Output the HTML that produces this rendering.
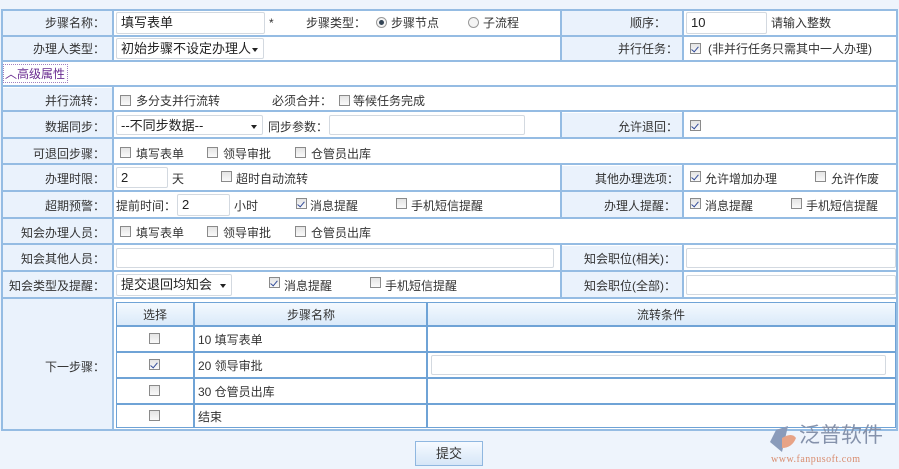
<!DOCTYPE html><html><head><meta charset="utf-8"><style>
*{box-sizing:border-box;margin:0;padding:0}
body{width:899px;height:469px;background:#eef4fc;font-family:"Liberation Sans","Noto Sans CJK SC",sans-serif;font-size:12px;color:#333;position:relative;overflow:hidden}
.a{position:absolute}
.w{background:#fff}
.hl{position:absolute;left:1px;width:897px;height:2px;background:#95bce3}
.vl{position:absolute;width:2px;background:#95bce3}
.t{position:absolute;white-space:nowrap;line-height:14px}
.in{position:absolute;background:#fff;border:1px solid #d3d9e0;border-radius:2px;padding-left:4px;line-height:20px;font-size:13px;color:#222}
.cb{position:absolute;width:11px;height:11px;border:1px solid #8a8a8a;background:linear-gradient(#e4e4e4,#fafafa);overflow:hidden}
.ck::after{content:"";position:absolute;left:2px;top:1px;width:3px;height:6px;border-right:1.5px solid #334c99;border-bottom:1.5px solid #334c99;transform:rotate(40deg)}
.rd{position:absolute;width:11px;height:11px;border:1px solid #999;border-radius:50%;background:#f4f4f4}
.rd.on::after{content:"";position:absolute;left:2px;top:2px;width:5px;height:5px;border-radius:50%;background:#345}
.sel::after{content:"";position:absolute;right:5px;top:9px;border:3px solid transparent;border-top:4px solid #222}
</style></head><body>
<div class="a w" style="left:1px;top:9px;width:897px;height:422px;border:2px solid #95bce3"></div>
<div class="a" style="left:3px;top:11px;width:110px;height:50px;background:#eaf2fc"></div>
<div class="a" style="left:3px;top:88px;width:110px;height:341px;background:#eaf2fc"></div>
<div class="a" style="left:561px;top:11px;width:122px;height:50px;background:#eaf2fc"></div>
<div class="a" style="left:561px;top:113px;width:122px;height:25px;background:#eaf2fc"></div>
<div class="a" style="left:561px;top:166px;width:122px;height:52px;background:#eaf2fc"></div>
<div class="a" style="left:561px;top:246px;width:122px;height:52px;background:#eaf2fc"></div>
<div class="hl" style="top:35px"></div><div class="hl" style="top:60px"></div><div class="hl" style="top:85px"></div><div class="hl" style="top:110px"></div><div class="hl" style="top:137px"></div><div class="hl" style="top:163px"></div><div class="hl" style="top:190px"></div><div class="hl" style="top:217px"></div><div class="hl" style="top:243px"></div><div class="hl" style="top:270px"></div><div class="hl" style="top:297px"></div>
<div class="vl" style="left:112px;top:9px;height:52px"></div>
<div class="vl" style="left:112px;top:86px;height:345px"></div>
<div class="vl" style="left:560px;top:9px;height:52px"></div><div class="vl" style="left:682px;top:9px;height:52px"></div>
<div class="vl" style="left:560px;top:111px;height:27px"></div><div class="vl" style="left:682px;top:111px;height:27px"></div>
<div class="vl" style="left:560px;top:164px;height:54px"></div><div class="vl" style="left:682px;top:164px;height:54px"></div>
<div class="vl" style="left:560px;top:244px;height:54px"></div><div class="vl" style="left:682px;top:244px;height:54px"></div>

<div class="t" style="left:45px;top:16px">步骤名称：</div>
<div class="in" style="left:116px;top:12px;width:149px;height:22px">填写表单</div>
<div class="t" style="left:269px;top:16px">*</div>
<div class="t" style="left:306px;top:16px">步骤类型：</div>
<div class="rd on" style="left:376px;top:17px"></div><div class="t" style="left:391px;top:16px">步骤节点</div>
<div class="rd" style="left:468px;top:17px"></div><div class="t" style="left:483px;top:16px">子流程</div>
<div class="t" style="left:630px;top:16px">顺序：</div>
<div class="in" style="left:686px;top:12px;width:81px;height:22px">10</div>
<div class="t" style="left:771px;top:16px">请输入整数</div>
<div class="t" style="left:33px;top:42px">办理人类型：</div>
<div class="in sel" style="left:116px;top:38px;width:148px;height:21px">初始步骤不设定办理人</div>
<div class="t" style="left:618px;top:42px">并行任务：</div>
<div class="cb ck" style="left:690px;top:43px"></div>
<div class="t" style="left:708px;top:42px">(非并行任务只需其中一人办理)</div>
<div class="a" style="left:3px;top:64px;width:65px;height:19px;border:1px dotted #a080c0"></div>
<div class="t" style="left:5px;top:67px;color:#6a2c91">︿高级属性</div>
<div class="t" style="left:45px;top:94px">并行流转：</div>
<div class="cb" style="left:120px;top:95px"></div><div class="t" style="left:136px;top:94px">多分支并行流转</div>
<div class="t" style="left:272px;top:94px">必须合并：</div>
<div class="cb" style="left:339px;top:95px"></div><div class="t" style="left:353px;top:94px">等候任务完成</div>
<div class="t" style="left:45px;top:120px">数据同步：</div>
<div class="in sel" style="left:116px;top:115px;width:147px;height:20px">--不同步数据--</div>
<div class="t" style="left:268px;top:120px">同步参数：</div>
<div class="in" style="left:329px;top:115px;width:196px;height:20px"></div>
<div class="t" style="left:618px;top:120px">允许退回：</div>
<div class="cb ck" style="left:690px;top:120px"></div>
<div class="t" style="left:33px;top:147px">可退回步骤：</div>
<div class="cb" style="left:120px;top:147px"></div><div class="t" style="left:136px;top:147px">填写表单</div>
<div class="cb" style="left:207px;top:147px"></div><div class="t" style="left:223px;top:147px">领导审批</div>
<div class="cb" style="left:295px;top:147px"></div><div class="t" style="left:311px;top:147px">仓管员出库</div>
<div class="t" style="left:45px;top:172px">办理时限：</div>
<div class="in" style="left:116px;top:167px;width:52px;height:21px">2</div>
<div class="t" style="left:172px;top:172px">天</div>
<div class="cb" style="left:221px;top:171px"></div><div class="t" style="left:236px;top:172px">超时自动流转</div>
<div class="t" style="left:595px;top:172px">其他办理选项：</div>
<div class="cb ck" style="left:690px;top:171px"></div><div class="t" style="left:705px;top:172px">允许增加办理</div>
<div class="cb" style="left:815px;top:171px"></div><div class="t" style="left:831px;top:172px">允许作废</div>
<div class="t" style="left:45px;top:199px">超期预警：</div>
<div class="t" style="left:116px;top:199px">提前时间：</div>
<div class="in" style="left:177px;top:194px;width:53px;height:22px">2</div>
<div class="t" style="left:234px;top:199px">小时</div>
<div class="cb ck" style="left:296px;top:198px"></div><div class="t" style="left:310px;top:199px">消息提醒</div>
<div class="cb" style="left:396px;top:198px"></div><div class="t" style="left:411px;top:199px">手机短信提醒</div>
<div class="t" style="left:604px;top:199px">办理人提醒：</div>
<div class="cb ck" style="left:690px;top:198px"></div><div class="t" style="left:705px;top:199px">消息提醒</div>
<div class="cb" style="left:791px;top:198px"></div><div class="t" style="left:806px;top:199px">手机短信提醒</div>
<div class="t" style="left:21px;top:226px">知会办理人员：</div>
<div class="cb" style="left:120px;top:226px"></div><div class="t" style="left:136px;top:226px">填写表单</div>
<div class="cb" style="left:207px;top:226px"></div><div class="t" style="left:223px;top:226px">领导审批</div>
<div class="cb" style="left:295px;top:226px"></div><div class="t" style="left:311px;top:226px">仓管员出库</div>
<div class="t" style="left:21px;top:252px">知会其他人员：</div>
<div class="in" style="left:116px;top:248px;width:438px;height:20px"></div>
<div class="t" style="left:584px;top:252px">知会职位(相关)：</div>
<div class="in" style="left:686px;top:248px;width:210px;height:20px"></div>
<div class="t" style="left:9px;top:279px">知会类型及提醒：</div>
<div class="in sel" style="left:116px;top:274px;width:116px;height:22px">提交退回均知会</div>
<div class="cb ck" style="left:269px;top:277px"></div><div class="t" style="left:284px;top:279px">消息提醒</div>
<div class="cb" style="left:370px;top:277px"></div><div class="t" style="left:385px;top:279px">手机短信提醒</div>
<div class="t" style="left:584px;top:279px">知会职位(全部)：</div>
<div class="in" style="left:686px;top:275px;width:210px;height:20px"></div>
<div class="t" style="left:45px;top:360px">下一步骤：</div>
<div class="a w" style="left:116px;top:302px;width:780px;height:126px;border:1px solid #6fa3d6"></div>
<div class="a" style="left:117px;top:303px;width:778px;height:23px;background:linear-gradient(#f4f9fe,#d9e9f9)"></div>
<div class="a" style="left:117px;top:325px;width:778px;height:2px;background:#6fa3d6"></div>
<div class="a" style="left:117px;top:351px;width:778px;height:2px;background:#6fa3d6"></div>
<div class="a" style="left:117px;top:377px;width:778px;height:2px;background:#6fa3d6"></div>
<div class="a" style="left:117px;top:403px;width:778px;height:2px;background:#6fa3d6"></div>
<div class="a" style="left:193px;top:303px;width:2px;height:124px;background:#6fa3d6"></div>
<div class="a" style="left:426px;top:303px;width:2px;height:124px;background:#6fa3d6"></div>
<div class="t" style="left:143px;top:308px">选择</div>
<div class="t" style="left:287px;top:308px">步骤名称</div>
<div class="t" style="left:637px;top:308px">流转条件</div>
<div class="cb" style="left:149px;top:333px"></div><div class="t" style="left:198px;top:333px">10 填写表单</div>
<div class="cb ck" style="left:149px;top:359px"></div><div class="t" style="left:198px;top:359px">20 领导审批</div>
<div class="in" style="left:431px;top:355px;width:455px;height:20px"></div>
<div class="cb" style="left:149px;top:385px"></div><div class="t" style="left:198px;top:385px">30 仓管员出库</div>
<div class="cb" style="left:149px;top:410px"></div><div class="t" style="left:198px;top:410px">结束</div>
<div class="a" style="left:415px;top:441px;width:68px;height:25px;border:1px solid #8fb7e0;background:linear-gradient(#f6faff,#d6e6f7);text-align:center;line-height:23px;font-size:13px">提交</div>
<svg class="a" style="left:768px;top:424px" width="30" height="30" viewBox="0 0 30 30"><path d="M8 6 L20 2 L14 28 L2 18Z" fill="#8a9bba"/><path d="M14 14 Q24 8 28 14 Q24 24 14 24Z" fill="#e7a386"/></svg>
<div class="t" style="left:799px;top:424px;font-size:21px;line-height:24px;color:#8592ab">泛普软件</div>
<div class="t" style="left:771px;top:453px;font-size:10px;color:#d98c6e;font-family:'Liberation Serif',serif;letter-spacing:0.5px">www.fanpusoft.com</div>
</body></html>
